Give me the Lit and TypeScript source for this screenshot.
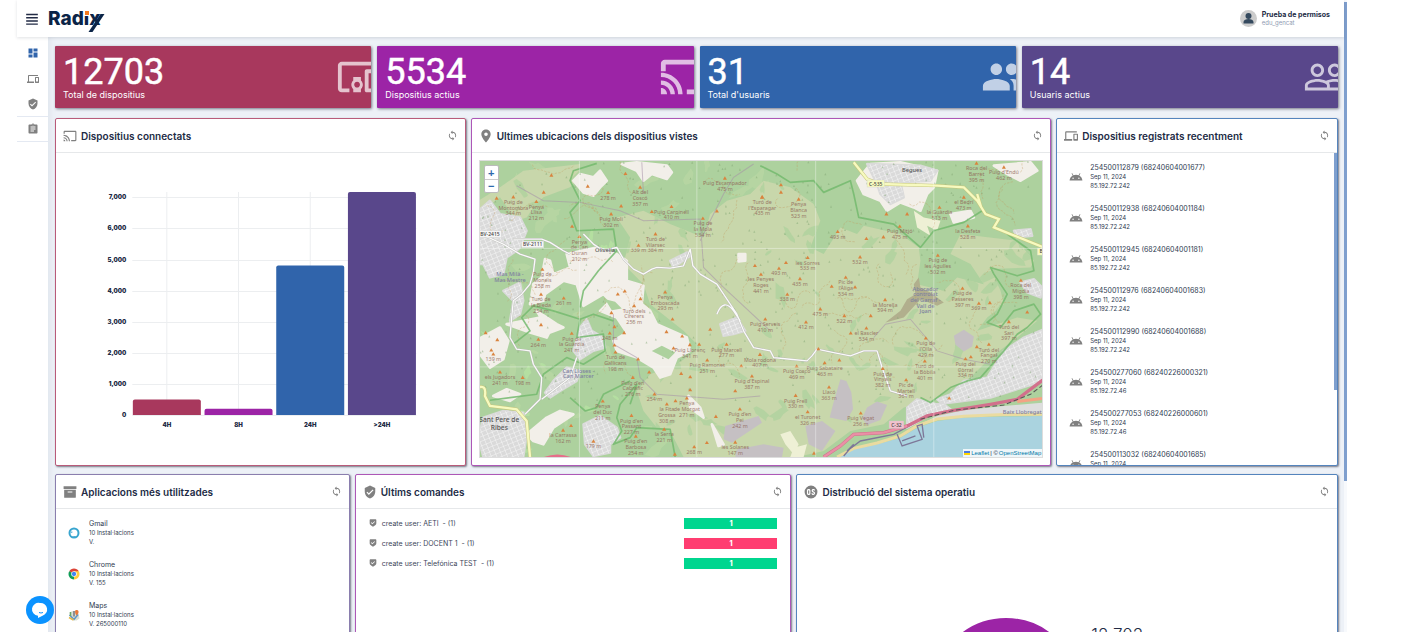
import { LitElement, html, svg, css } from "lit";
import { customElement, property } from "lit/decorators.js";

const ICONS: Record<string, string> = {
  menu: "M2 3h20v2.500H2zM2 8.500h20V11H2zM2 14h20v2.500H2zM2 19.500h20V22H2z",
  dashboard: "M3 13h8V3H3v10zm0 8h8v-6H3v6zm10 0h8V11h-8v10zm0-18v6h8V3h-8z",
  devices:
    "M4 6h18V4H4c-1.1 0-2 .9-2 2v11H0v3h14v-3H4V6zm19 2h-6c-.55 0-1 .45-1 1v10c0 .55.45 1 1 1h6c.55 0 1-.45 1-1V9c0-.55-.45-1-1-1zm-1 9h-4v-7h4v7z",
  shield:
    "M12 1L3 5v6c0 5.55 3.84 10.74 9 12 5.16-1.26 9-6.45 9-12V5l-9-4zm-2 16l-4-4 1.41-1.41L10 14.17l6.59-6.59L18 9l-8 8z",
  command:
    "M4 1h16c1 0 2 1 2 2v10c0 4-3 6-10 10C5 19 2 17 2 13V3c0-1 1-2 2-2zm6 15l8-8-1.5-1.5L10 13l-3-3-1.5 1.5z",
  clipboard:
    "M19 3h-4.18C14.4 1.84 13.3 1 12 1c-1.3 0-2.4.84-2.82 2H5c-1.1 0-2 .9-2 2v14c0 1.1.9 2 2 2h14c1.1 0 2-.9 2-2V5c0-1.1-.9-2-2-2zm-7 0c.55 0 1 .45 1 1s-.45 1-1 1-1-.45-1-1 .45-1 1-1zm2 14H7v-2h7v2zm3-4H7v-2h10v2zm0-4H7V7h10v2z",
  cast:
    "M21 3H3c-1.1 0-2 .9-2 2v3h2V5h18v14h-7v2h7c1.1 0 2-.9 2-2V5c0-1.1-.9-2-2-2zM1 18v3h3c0-1.66-1.34-3-3-3zm0-4v2c2.76 0 5 2.24 5 5h2c0-3.87-3.13-7-7-7zm0-4v2c4.97 0 9 4.03 9 9h2c0-6.08-4.93-11-11-11z",
  castLarge:
    "M23 3H3c-1.100 0-2 .9-2 2v4h2.500V5.500H24V3zM1 17.800V21h3.200c0-1.800-1.400-3.200-3.200-3.200zm0-4v2.200c2.700 0 5 2.300 5 5h2.300c0-4-3.300-7.200-7.300-7.200zm0-4V12c5 0 9 4 9 9h2.300C12.300 14.800 7.200 9.800 1 9.800zM14.500 18.500V21H24v-2.500z",
  place:
    "M12 1C7.600 1 4 4.600 4 9c0 6 8 14 8 14s8-8 8-14c0-4.400-3.600-8-8-8zm0 11c-1.700 0-3-1.300-3-3s1.300-3 3-3 3 1.300 3 3-1.300 3-3 3z",
  sync:
    "M12 4V1L8 5l4 4V6c3.310 0 6 2.690 6 6 0 1.010-.25 1.970-.7 2.800l1.460 1.460C19.540 15.030 20 13.570 20 12c0-4.420-3.580-8-8-8zm0 14c-3.310 0-6-2.690-6-6 0-1.010.25-1.970.7-2.800L5.240 7.740C4.460 8.970 4 10.430 4 12c0 4.420 3.580 8 8 8v3l4-4-4-4v3z",
  people:
    "M16 11c1.660 0 2.990-1.340 2.990-3S17.660 5 16 5c-1.660 0-3 1.340-3 3s1.340 3 3 3zm-8 0c1.660 0 2.990-1.340 2.990-3S9.660 5 8 5C6.340 5 5 6.340 5 8s1.340 3 3 3zm0 2c-2.330 0-7 1.170-7 3.500V19h14v-2.500c0-2.330-4.670-3.500-7-3.500zm8 0c-.29 0-.62.02-.97.05 1.160.84 1.970 1.970 1.970 3.450V19h6v-2.500c0-2.330-4.670-3.500-7-3.500z",
  peopleOutline:
    "M16.500 13c-1.200 0-3.070.34-4.500 1-1.430-.67-3.300-1-4.500-1C5.330 13 1 14.080 1 16.250V19h22v-2.750c0-2.170-4.330-3.250-6.500-3.250zm-4 4.500h-10v-1.250c0-.54 2.560-1.750 5-1.750s5 1.210 5 1.750v1.250zm9 0H14v-1.250c0-.46-.2-.86-.52-1.220.88-.3 1.960-.53 3.020-.53 2.440 0 5 1.210 5 1.750v1.250zM7.500 12c1.930 0 3.500-1.570 3.500-3.500S9.430 5 7.500 5 4 6.570 4 8.500 5.570 12 7.500 12zm0-5.500c1.100 0 2 .9 2 2s-.9 2-2 2-2-.9-2-2 .9-2 2-2zm9 5.500c1.930 0 3.500-1.570 3.500-3.500S18.430 5 16.500 5 13 6.570 13 8.500s1.570 3.500 3.500 3.500zm0-5.500c1.100 0 2 .9 2 2s-.9 2-2 2-2-.9-2-2 .9-2 2-2z",
  devicesOther:
    "M3 6h18V4H3c-1.100 0-2 .9-2 2v12c0 1.100.9 2 2 2h4v-2H3V6zm10 6H9v1.780c-.61.55-1 1.330-1 2.220s.39 1.670 1 2.220V20h4v-1.780c.61-.55 1-1.340 1-2.220s-.39-1.670-1-2.220V12zm-2 5.500c-.83 0-1.500-.67-1.500-1.500s.67-1.500 1.500-1.500 1.500.67 1.500 1.500-.67 1.500-1.500 1.500zM22 8h-6c-.5 0-1 .5-1 1v10c0 .5.5 1 1 1h6c.5 0 1-.5 1-1V9c0-.5-.5-1-1-1zm-1 10h-4v-8h4v8z",
  android:
    "M17.600 9.480l1.840-3.180c.16-.31.04-.69-.26-.85-.29-.15-.65-.06-.83.22l-1.880 3.240c-2.860-1.210-6.080-1.210-8.940 0L5.650 5.670c-.19-.29-.58-.38-.87-.2-.28.18-.37.54-.22.83L6.400 9.480C3.300 11.250 1.280 14.440 1 18h22c-.28-3.560-2.300-6.750-5.400-8.520zM7 15.250c-.69 0-1.250-.56-1.250-1.250S6.310 12.750 7 12.750s1.250.56 1.250 1.250-.56 1.250-1.250 1.250zm10 0c-.69 0-1.250-.56-1.250-1.250s.56-1.250 1.250-1.250 1.250.56 1.250 1.250-.56 1.250-1.250 1.250z",
  archive: "M1 2h22v5H1zM2 8h20v13c0 1-1 1-1 1H3c-1 0-1 0-1-1zm6 3v2h8v-2z",
  os:
    "M12 1a11 11 0 1 0 0 22 11 11 0 0 0 0-22zM8 7c2 0 3 1 3 3v4c0 2-1 3-3 3s-3-1-3-3v-4c0-2 1-3 3-3zm0 2c-.7 0-1 .4-1 1v4c0 .6.3 1 1 1s1-.4 1-1v-4c0-.6-.3-1-1-1zm8-2c2 0 3 1 3 2.500h-2c0-.5-.5-.7-1-.7-1 0-1.200 1.200-.3 1.700l1.800 1c2.500 1.500 1.500 5.500-1.500 5.500-2 0-3.200-1-3.200-3h2c0 .8.4 1.200 1.200 1.200 1.200 0 1.300-1.200.4-1.800l-1.700-1C12 10.900 13 7 16 7z",
};

const icon = (name: string, cls = "") =>
  html`<svg class="icon ${cls}" viewBox="0 0 24 24" aria-hidden="true"><path fill-rule="evenodd" d=${ICONS[name]}></path></svg>`;

const STATS = [
  { value: "12703", label: "Total de dispositius", icon: "devicesOther", tone: "red" },
  { value: "5534", label: "Dispositius actius", icon: "castLarge", tone: "magenta" },
  { value: "31", label: "Total d'usuaris", icon: "people", tone: "blue" },
  { value: "14", label: "Usuaris actius", icon: "peopleOutline", tone: "violet" },
];

const DEVICES = [
  ["254500112879 (68240604001677)", "85.192.72.242"],
  ["254500112938 (68240604001184)", "85.192.72.242"],
  ["254500112945 (68240604001181)", "85.192.72.242"],
  ["254500112976 (68240604001683)", "85.192.72.242"],
  ["254500112990 (68240604001688)", "85.192.72.242"],
  ["254500277060 (68240226000321)", "85.192.72.46"],
  ["254500277053 (68240226000601)", "85.192.72.46"],
  ["254500113032 (68240604001685)", "85.192.72.242"],
];

const COMMANDS = [
  { text: "create user: AETI  - (1)", ok: true },
  { text: "create user: DOCENT 1  - (1)", ok: false },
  { text: "create user: Telefónica TEST  - (1)", ok: true },
];

const BARS = [
  { label: "4H", value: 500, color: "#a8385d" },
  { label: "8H", value: 200, color: "#9c24a6" },
  { label: "24H", value: 4810, color: "#3064ab" },
  { label: ">24H", value: 7170, color: "#59478b" },
];

/* Peaks: x, y of the marker, then the label lines under it. */
const PEAKS: [number, number, ...string[]][] = [
  [130, 139, "Puig de", "Montombra", "344 m"], [199, 153, "Penya", "Llisa", "212 m"],
  [414, 126, "278 m"], [423, 190, "Puig Moli", "302 m"], [510, 110, "Alt del", "Coscó", "357 m"],
  [604, 168, "Puig Carpinell", "410 m"], [698, 203, "Puig de", "la Mola", "534 m"],
  [764, 83, "Puig Escampador", "475 m"], [876, 139, "Turó de", "l'Esparagar", "435 m"],
  [328, 258, "Penya", "de Can", "Duran", "212 m"], [505, 284, "339 m"], [556, 250, "Turó de", "Vilarsec", "384 m"],
  [217, 356, "Puig de", "Moneis", "258 m"], [213, 431, "Turó de", "la Bleda", "254 m"], [281, 442, "261 m"],
  [492, 465, "Turó dels", "Cirerers", "255 m"], [585, 424, "Penya", "Emboscada", "293 m"],
  [872, 371, "les Penyes", "Roges", "441 m"], [885, 505, "Puig Serveis", "410 m"],
  [205, 566, "264 m"], [305, 548, "Puig de", "la Guàrdia", "241 m"], [419, 547, "248 m"],
  [436, 604, "Turó de", "Gallicans", "198 m"], [659, 582, "Puig Llorenç", "341 m"], [769, 581, "Puig Marcell", "277 m"],
  [711, 628, "Puig Ramonet", "251 m"], [869, 611, "Mola rodona", "407 m"], [90, 664, "els Jugadors", "241 m"],
  [158, 680, "198 m"], [488, 680, "Puig d'en", "Cabrafic", "276 m"], [553, 730, "254 m"],
  [590, 760, "la Fita", "Grossa", "308 m"], [650, 742, "Penya", "de Morgat", "271 m"], [845, 676, "Puig d'Espinal", "387 m"],
  [398, 751, "Penya", "del Duc", "211 m"], [484, 794, "Puig d'en", "Passant", "227 m"], [809, 775, "Puig d'en", "Pei", "242 m"],
  [279, 838, "la Carrassa", "162 m"], [582, 835, "la Serra", "221 m"], [497, 856, "Puig d'en", "Barbosa", "254 m"],
  [795, 874, "les Solanes", "147 m"], [672, 888, "268 m"], [370, 871, "179 m"], [70, 610, "139 m"],
  [985, 146, "Penya", "Blanca", "523 m"], [1102, 243, "493 m"], [1012, 321, "les Sorres", "533 m"],
  [1169, 319, "532 m"], [926, 353, "493 m"], [989, 384, "435 m"], [951, 431, "338 m"],
  [1126, 380, "Pic de", "l'Àliga", "534 m"], [1244, 447, "la Morella", "594 m"], [1122, 495, "522 m"],
  [1050, 475, "475 m"], [1007, 514, "412 m"], [1188, 532, "el Rascler", "534 m"], [1402, 314, "Puig de", "les Agulles", "502 m"],
  [1288, 227, "Puig Mitjó", "475 m"], [1407, 170, "la Guàrdia", "513 m"], [1480, 140, "el Bedrí", "473 m"],
  [1492, 226, "la Desfeta", "528 m"], [1600, 50, "Puig d'Endú", "462 m"], [1518, 38, "Roca del", "Barret", "395 m"],
  [1476, 413, "Puig de", "Passeres", "397 m"], [1525, 458, "369 m"], [1651, 389, "Roca del", "Migdia", "398 m"],
  [1366, 562, "Puig de", "l'Olla", "429 m"], [1363, 631, "Turó de", "la Bòbila", "401 m"], [1615, 513, "Turó del", "Sari", "397 m"],
  [1555, 581, "Turó del", "Fangal", "270 m"], [1485, 624, "Puig del", "Còrral", "334 m"], [979, 646, "Puig Coscó", "469 m"],
  [1063, 636, "Puig Sabataire", "463 m"], [1237, 653, "Puig de", "Vinyals", "382 m"], [1307, 687, "Pic de", "Martell", "361 m"],
  [1076, 709, "Llacó", "363 m"], [976, 734, "Puig Frell", "330 m"], [1012, 783, "el Turonet", "326 m"], [1171, 787, "Puig Vegat", "256 m"],
];

const DOTS = [
  [244, 74], [221, 125], [353, 107], [466, 69], [453, 166], [545, 183], [740, 181], [80, 143], [306, 227],
  [443, 430], [464, 421], [511, 444], [424, 486], [433, 528], [462, 546], [213, 522], [47, 546], [64, 598], [82, 567],
  [607, 505], [589, 543], [636, 556], [687, 581], [720, 536], [610, 592], [504, 625], [537, 664], [633, 668], [660, 678],
  [433, 583], [303, 824], [616, 750], [660, 717], [737, 797], [710, 875], [614, 910], [795, 720], [813, 645], [854, 345],
  [932, 103], [932, 125], [875, 140], [1188, 264], [1239, 259], [1248, 190], [1310, 190], [947, 336], [1084, 407], [1154, 409],
  [1141, 547], [1201, 495], [1044, 594], [1107, 628], [1558, 456], [1670, 484], [1519, 588], [1501, 618], [1436, 742], [1031, 907],
];

/* Small deterministic generator, so the woodland texture is stable. */
const rng = (seed: number) => () => {
  seed = (seed * 1664525 + 1013904223) % 4294967296;
  return seed / 4294967296;
};

const patches = (seed: number, count: number, size: number, x0: number, y0: number, w: number, h: number) => {
  const r = rng(seed);
  let d = "";
  for (let i = 0; i < count; i++) {
    const cx = x0 + r() * w;
    const cy = y0 + r() * h;
    const a = r() * Math.PI;
    const len = size * (0.4 + r());
    for (let k = 0; k < 9; k++) {
      const t = (k / 9) * Math.PI * 2;
      const m = 0.5 + r() * 0.8;
      const px = Math.cos(t) * len * m;
      const py = Math.sin(t) * len * m * 0.4;
      const x = cx + px * Math.cos(a) - py * Math.sin(a);
      const y = cy + px * Math.sin(a) + py * Math.cos(a);
      d += `${k ? "L" : "M"}${x.toFixed(0)} ${y.toFixed(0)}`;
    }
    d += "z";
  }
  return d;
};

const trails = (seed: number, count: number) => {
  const r = rng(seed);
  let d = "";
  for (let i = 0; i < count; i++) {
    let x = 30 + r() * 1650;
    let y = 40 + r() * 640;
    let a = r() * Math.PI * 2;
    d += `M${x.toFixed(0)} ${y.toFixed(0)}`;
    for (let k = 0; k < 12; k++) {
      a += (r() - 0.5) * 1.8;
      x += Math.cos(a) * 12;
      y += Math.sin(a) * 12;
      d += `L${x.toFixed(0)} ${y.toFixed(0)}`;
    }
  }
  return d;
};

const specks = (seed: number, count: number) => {
  const r = rng(seed);
  let d = "";
  for (let i = 0; i < count; i++) d += `M${(r() * 1700).toFixed(0)} ${(35 + r() * 720).toFixed(0)}l3 -7l3 7z`;
  return d;
};

const SCRUB =
  "M25 150L90 110 160 60 330 40 320 90 300 110 220 140 190 170 170 200 140 210 90 140 25 190zM440 200L520 180 600 220 700 260 720 190 770 150 840 130 880 90 960 110 1030 160 1050 210 1020 290 1060 310 1110 230 1160 250 1180 225 1290 250 1345 290 1350 330 1340 400 1420 420 1460 380 1540 400 1500 340 1440 310 1470 250 1640 270 1690 330 1680 350 1560 355 1590 420 1600 460 1550 500 1520 540 1640 500 1700 510 1640 560 1560 620 1500 680 1430 720 1380 750 1300 770 1240 820 1140 840 1060 900 980 918 640 918 600 840 560 830 520 780 500 720 540 670 620 640 690 590 640 540 540 460 520 400 460 340 480 260z";
const BARE =
  "M310 90L330 70 370 80 390 60 410 90 390 110 370 135 340 125zM455 40L500 35 590 45 605 65 590 85 545 70 520 90 500 60zM225 325L240 330 250 370 300 350 290 310 380 290 440 310 470 330 470 390 520 405 515 460 540 480 560 520 650 560 660 600 620 620 600 670 570 680 550 650 500 620 440 600 430 570 470 545 440 500 390 480 420 450 400 430 340 465 320 400 280 390 225 430 220 450 180 460 190 400 215 380zM110 520L210 500 250 520 230 560 180 545zM200 480L260 520 280 530 240 545zM25 565L90 530 115 570 100 625 60 650 30 610zM70 735L110 715 150 730 120 750zM170 850L230 800 270 780 310 790 250 830 220 880 190 870zM805 310L825 310 825 330 805 332zM1290 35L1400 60 1390 110 1370 130 1350 180 1330 170 1290 155 1250 180 1230 150 1180 130 1160 90 1200 40zM1570 45L1680 35 1700 60 1650 90 1610 70zM1440 190L1500 180 1510 200 1450 215zM655 735L690 770 700 800 660 770zM725 820L760 880 745 885z";
const MEADOW = "M1330 180L1360 200 1410 210 1400 240 1370 225 1380 255 1340 230zM930 850L960 840 985 880 970 910 945 880zM970 890L1010 880 1000 918 960 918z";
const TOWNS =
  "M25 180L60 150 90 190 150 200 170 240 150 290 140 300 110 320 100 370 60 380 40 340 25 340zM100 420L150 395 160 450 150 490 120 510 130 450zM330 530L350 505 365 540 400 560 405 590 370 600 330 625 310 600zM250 690L290 650 330 660 320 690 270 720 240 740 225 725zM40 800L100 780 160 785 170 850 160 918 40 918 25 860zM340 820L390 795 440 830 450 860 420 880 420 905 370 915 345 880zM750 520L800 500 825 540 790 550 760 555zM600 330L650 305 660 315 610 350zM1190 40L1350 45 1400 60 1380 90 1290 95 1300 140 1260 160 1230 130 1220 100zM1650 395L1690 385 1715 410 1710 440 1670 425zM1720 535L1660 560 1600 600 1550 680 1480 690 1440 730 1400 745 1440 775 1380 790 1310 830 1310 770 1340 745 1400 760 1560 740 1720 690zM1630 240L1680 235 1685 255 1640 260z";
const PARK =
  "M380 38L310 60 300 90 330 150 300 185 320 240 430 235 440 300 385 360 340 420 330 470M130 580L180 540 155 500 190 465 250 480 330 505 370 490 430 510M330 505L320 560 400 550 405 600 340 640 290 620 220 670 200 730 60 748M300 740L345 780 380 770 400 730 480 690M450 760L440 800 455 840 430 880 480 860 500 830 600 835 615 918M450 760L500 700 480 760M870 45L920 70 960 95 1030 90 1060 125 1140 90 1150 130 1165 200 1270 220 1350 290 1390 240 1480 215 1535 180M1610 250L1680 300 1690 360 1640 375 1560 350 1570 370 1610 430 1580 490 1550 515 1590 530 1630 480 1690 460 1710 490 1670 530 1640 550 1600 600 1530 680 1490 690 1440 710 1380 755 1350 740";
const ROADS =
  "M25 250L60 262 100 280 150 310 195 325 190 365 180 400 155 430 130 450 125 500 120 560 140 595 180 600 190 640 215 680 210 745 165 790M130 265L215 265 240 275 280 300 300 310M340 250L370 280 400 300 440 290 460 325 490 355 520 370 545 355 560 350 600 352 640 345 660 295 668 345 690 370 740 400 760 430 780 460 800 490 820 540 850 590 900 600 910 620 960 625 1010 630 1025 615 1040 595 1090 605 1140 615 1180 600 1220 600 1235 650M215 745L300 680 320 620M1235 650L1260 720 1310 735M740 490Q760 440 790 480L810 510";

const mapArt = () => svg`
  <defs><clipPath id="urban"><path d=${TOWNS}></path></clipPath>
    <pattern id="streets" width="15" height="13" patternUnits="userSpaceOnUse" patternTransform="rotate(-22)"><path d="M0 0H15M0 0V13" stroke="#fff" stroke-width="3" fill="none"></path></pattern>
    <clipPath id="scrub"><path d=${SCRUB}></path></clipPath></defs>
  <rect x="0" y="0" width="1760" height="950" fill="#add19e"></rect>
  <path d=${patches(5, 50, 34, 20, 40, 900, 860)} fill="#b9d8a4" opacity=".7"></path>
  <path d=${patches(41, 18, 26, 20, 40, 600, 860)} fill="#b9e8a3" opacity=".6"></path>
  <path d=${SCRUB} fill="#c8d7ab"></path>
  <g clip-path="url(#scrub)"><path d=${patches(77, 150, 26, 20, 60, 1700, 850)} fill="#add19e" opacity=".75"></path></g>
  <path d=${BARE} fill="#f2efe9" stroke="#f2efe9" stroke-width="8" stroke-linejoin="round"></path>
  <path d=${MEADOW} fill="#eef0d5"></path>
  <path d="M250 425l25 -20 40 20 -15 40 -50 -10zM545 600l30 -15 40 20 -20 20zM405 445l30 8 20 20 -30 5z" fill="#add19e"></path>
  <path d=${TOWNS} fill="#dadada" stroke="#dadada" stroke-width="7" stroke-linejoin="round"></path>
  <g clip-path="url(#urban)"><rect x="0" y="0" width="1760" height="950" fill="url(#streets)" opacity=".8"></rect></g>
  <path d="M1110 685l18 5 15 35 5 50 -20 35 -50 -10 10 -40zM1190 770l30 -18 30 10 -20 45 -40 15 -15 -20zM1005 825l50 -15 40 30 -40 60 -40 -20zM1450 555l30 -18 30 20 -5 30 -25 15 -25 -20zM765 825l100 -30 10 20 -90 60 -25 -10zM800 895l80 -15 60 10 -5 30h-140z" fill="#c5c0c3"></path>
  <path d="M1245 515L1290 480 1310 445 1335 430 1330 400 1345 380 1350 410 1380 425 1420 455 1400 465 1350 445 1300 500z" fill="#b1af8d"></path>
  <path d=${specks(9, 430)} fill="#83a876" opacity=".5"></path>
  <path d=${trails(13, 50)} fill="none" stroke="#c19a62" stroke-width="2" stroke-dasharray="7 4" opacity=".55"></path>
  <path d="M140 105L220 150 330 155 450 180 520 210 690 205 700 350 760 410 900 540M515 35L520 130M690 270L760 130 790 80 850 40M1210 560L1245 520 1320 505 1400 600 1480 625 1560 640M430 490L430 580 500 620 510 680 560 730 760 745 870 735" fill="none" stroke="#a58fa8" stroke-width="3" opacity=".55"></path>
  <path d=${PARK} fill="none" stroke="#74ba6e" stroke-width="5" opacity=".85" stroke-linejoin="round"></path>
  <path d=${ROADS} fill="none" stroke="#b5b5b0" stroke-width="6" stroke-linejoin="round"></path>
  <path d=${ROADS} fill="none" stroke="#fafafa" stroke-width="4" stroke-linejoin="round"></path>
  <path d="M1150 35L1190 85 1230 100 1400 105 1480 110 1520 150 1545 190 1585 205 1570 230 1620 250 1720 290M1520 130l12 40" fill="none" stroke="#c7c77e" stroke-width="10"></path>
  <path d="M1150 35L1190 85 1230 100 1400 105 1480 110 1520 150 1545 190 1585 205 1570 230 1620 250 1720 290M1520 130l12 40" fill="none" stroke="#f7fabf" stroke-width="7"></path>
  <path d="M25 710Q50 700 45 735L60 765 140 775 170 810 180 918" fill="none" stroke="#c7c77e" stroke-width="10"></path>
  <path d="M25 710Q50 700 45 735L60 765 140 775 170 810 180 918" fill="none" stroke="#f7fabf" stroke-width="7"></path>
  <path d="M1100 918L1150 895 1220 880 1290 860 1340 830 1400 810 1480 800 1600 797 1720 795V950H1100z" fill="#aad3df"></path>
  <path d="M1340 824L1400 795 1480 778 1600 765 1720 755V790H1600L1480 796 1400 804z" fill="#dedede"></path>
  <path d="M1100 918L1150 892 1220 876 1290 855 1340 824 1400 804 1480 796 1600 791 1720 790" fill="none" stroke="#eadba0" stroke-width="9"></path>
  <path d="M1120 915L1150 880 1130 900 1170 870 1270 850 1380 790 1450 780M1280 850l15 35 60 -20 -15 -40 15 -5 5 40M1295 870l40 -15" fill="none" stroke="#7d7798" stroke-width="4"></path>
  <path d="M1060 918L1110 885 1150 850 1240 845 1310 825 1370 795 1440 780 1560 760 1640 745 1720 685" fill="none" stroke="#d2708c" stroke-width="10"></path>
  <path d="M1060 918L1110 885 1150 850 1240 845 1310 825" fill="none" stroke="#ea8fa6" stroke-width="7"></path>
  <path d="M1640 752L1720 742" stroke="#f3a384" stroke-width="9"></path>
  <path d="M1350 805L1450 778 1600 762 1680 730 1720 700" fill="none" stroke="#555" stroke-width="3" stroke-dasharray="14 8"></path>
  <path d="M222 918q40 -15 80 0z" fill="#e66e89"></path>
  <g fill="#d9843f">${[...PEAKS, ...DOTS].map((p) => svg`<path d="M${p[0] as number} ${(p[1] as number) - 6}l6 10h-12z"></path>`)}</g>
  <g class="peak">${PEAKS.map(([x, y, ...lines]) => lines.map((t, i) => svg`<text x=${x} y=${y + 21 + i * 17}>${t}</text>`))}</g>
  <g class="town">
    <text x="405" y="305">Olivella</text><text x="1325" y="63">Begues</text>
    <text class="faint" x="120" y="375">Mas Milà -</text><text class="faint" x="120" y="393">Mas Mestre</text>
    <text class="faint" x="325" y="665">Can Lloses -</text><text class="faint" x="325" y="681">Can Marcer</text>
    <text class="faint" x="1365" y="420">Abocador</text><text class="faint" x="1365" y="437">controlat</text><text class="faint" x="1365" y="454">del Garraf -</text><text class="faint" x="1365" y="471">Vall de</text><text class="faint" x="1365" y="488">Joan</text>
    <text class="faint" x="1655" y="790">Baix Llobregat</text>
    <text class="big" x="88" y="814">Sant Pere de</text><text class="big" x="88" y="838">Ribes</text>
  </g>
  <g class="road">
    <rect x="26" y="240" width="68" height="20"></rect><text x="60" y="256">BV-2415</text>
    <rect x="155" y="271" width="66" height="20"></rect><text x="188" y="287">BV-2111</text>
    <rect class="yellow" x="1190" y="88" width="52" height="21"></rect><text x="1216" y="105">C-535</text>
    <rect class="yellow" x="1700" y="292" width="40" height="21"></rect><text x="1712" y="308">B</text>
    <rect class="pink" x="1256" y="810" width="44" height="22"></rect><text x="1278" y="827">C-32</text>
  </g>
  <path d="M328 31V918M680 31V918M1036 31V918M1390 31V918M25 293H1721M25 648H1721" stroke="#fff" stroke-width="2" opacity=".55"></path>`;

@customElement("radix-panel")
export class RadixPanel extends LitElement {
  @property() heading = "";
  @property() glyph = "";

  static styles = css`
    :host { display: flex; flex-direction: column; box-sizing: border-box; min-width: 0; background: #fff;
      border: 1px solid var(--tone); border-radius: 2px; box-shadow: 1px 1px 2px rgba(40, 40, 60, 0.6); overflow: hidden; }
    .head { display: flex; align-items: center; gap: 4px; height: 34px; box-sizing: border-box; padding: 0 7px; border-bottom: 1px solid #e6e8ea; }
    h2 { flex: 1; margin: 0; font: 600 10px/14px Inter, "Open Sans", sans-serif; color: #222b45; white-space: nowrap; }
    .icon { width: 14px; height: 14px; fill: #808080; flex: none; }
    button { display: flex; padding: 0; border: 0; background: none; cursor: pointer; }
    .sync { width: 11px; height: 11px; }
    .body { height: 312px; min-height: 0; }
  `;

  render() {
    return html`<header class="head">
        ${icon(this.glyph)}
        <h2>${this.heading}</h2>
        <button type="button" aria-label="Actualitza ${this.heading}">${icon("sync", "sync")}</button>
      </header>
      <div class="body"><slot></slot></div>`;
  }
}

@customElement("app-root")
export class AppRoot extends LitElement {
  static styles = css`
    :host { display: block; height: 100vh; box-sizing: border-box; padding: 0 54px 2px 17px; background: #fff; overflow: hidden;
      font-family: Inter, "Open Sans", sans-serif; color: #222b45; }
    * { box-sizing: border-box; }
    ul { list-style: none; margin: 0; padding: 0; }
    .icon { width: 12px; height: 12px; fill: #808080; flex: none; display: block; }
    .shell { display: flex; height: 100%; position: relative; }
    .page { flex: 1; min-width: 0; display: flex; flex-direction: column; }
    .rail { width: 3px; background: #f7f9fc; padding-top: 2px; }
    .thumb { display: block; width: 3px; height: 76%; background: #7f9fce; }

    .top { display: flex; align-items: center; height: 37px; padding: 0 14px 0 8px; flex: none; box-shadow: 0 1px 3px rgba(44, 51, 73, 0.15); z-index: 1; background: #fff; }
    .menu { display: flex; padding: 0; border: 0; background: none; }
    .menu .icon { width: 14px; height: 14px; fill: #222b45; }
    .logo { position: relative; margin-left: 9px; font: 800 19px/24px Inter, sans-serif; color: #0b2447; text-decoration: none; }
    .mark { position: absolute; left: 36px; top: 0; width: 24px; height: 28px; overflow: visible; }
    .user { margin-left: auto; display: flex; align-items: center; gap: 5px; }
    .avatar { width: 17px; height: 17px; display: block; }
    .who { display: flex; flex-direction: column; }
    .name { font: 700 7px/9px Inter, sans-serif; }
    .login { font: 400 6px/8px Inter, sans-serif; color: #8f9bb3; }

    .main { flex: 1; min-height: 0; display: flex; }
    .side { width: 31px; padding-top: 3px; background: #fff; }
    .side a { display: flex; align-items: center; justify-content: center; height: 26px; }
    .side .line { border-bottom: 1px solid #e4e9f2; height: 25px; }
    .side .on { fill: #3064ab; }

    .content { flex: 1; min-width: 0; padding: 9px 6px 0 7px; background: #edf1f7; box-shadow: inset 6px 0 6px -4px #dfe4ec; overflow: hidden; }
    .stats { display: grid; grid-template-columns: repeat(4, 1fr); gap: 6px; margin-bottom: 10px; }
    .stat { display: flex; align-items: center; height: 62px; padding-left: 8px; border-radius: 1px; color: #fff; overflow: hidden; box-shadow: 1px 1px 3px rgba(40, 40, 60, 0.6); }
    .figures { flex: 1; min-width: 0; }
    .value { display: block; font: 400 36px/36px Roboto, sans-serif; -webkit-text-stroke: 0.5px #fff; }
    .label { display: block; font: 400 9px/10px Inter, sans-serif; }
    .stat .icon { width: 46px; height: 46px; margin-right: -11px; fill: #fff; opacity: 0.7; }
    .red { background: #a8385d; --tone: #b95b7a; }
    .magenta { background: #9c24a6; --tone: #ad57b7; }
    .blue { background: #3064ab; --tone: #5484bd; }
    .violet { background: #59478b; --tone: #8a7eae; }
    .row { display: grid; gap: 5px; margin-bottom: 8px; }
    .upper { grid-template-columns: 411fr 581fr 282fr; }
    .lower { grid-template-columns: 295fr 437fr 542fr; }
    .row radix-panel { background: #fff; }

    .chart { display: block; width: 100%; height: 100%; }
    .chart text { font: 900 6px Inter, sans-serif; fill: #222b45; }
    .grid { stroke: #eceef0; fill: none; }

    .map { position: relative; height: 100%; padding: 7px; }
    .map-art { display: block; width: 100%; height: 100%; background: #ddd; border: 1px solid #ddd; }
    .peak text { font: 400 16px "Noto Sans", sans-serif; fill: #8f6356; text-anchor: middle; opacity: 0.8; }
    .town text { font: 500 17px "Noto Sans", sans-serif; fill: #555; text-anchor: middle; }
    .town .faint { fill: #7d80a0; }
    .town .big { font-size: 20px; }
    .road rect { fill: #f5f5f5; stroke: #ccc; }
    .road .yellow { fill: #f7fabf; }
    .road .pink { fill: #f1c1cd; }
    .road text { font: 500 15px "Noto Sans", sans-serif; fill: #444; text-anchor: middle; }
    .zoom { position: absolute; left: 12px; top: 12px; display: grid; border: 1px solid #bbb; border-radius: 2px; background: #fff; }
    .zoom button { width: 13px; height: 13px; padding: 0; border: 0; background: none; font: 700 11px/12px "Liberation Sans", sans-serif; color: #2e69ad; }
    .zoom button + button { border-top: 1px solid #ccc; }
    .credit { position: absolute; right: 8px; bottom: 8px; display: flex; align-items: center; gap: 1px; padding: 0 1px; background: rgba(255, 255, 255, 0.8); font: 400 6px/8px "Liberation Sans", sans-serif; }
    .credit a { color: #0078a8; text-decoration: none; }
    .flag { width: 6px; height: 4px; }

    .scroller { display: flex; height: 100%; overflow: hidden; }
    .list { flex: 1; padding-top: 10px; }
    .item { display: flex; align-items: center; gap: 8px; height: 27px; margin-bottom: 14px; padding-left: 12px; font-size: 6px; line-height: 9px; }
    .item .strong { font-size: 7px; }
    .item div { color: #2e3a4f; white-space: nowrap; }
    .devices .item { gap: 7px; }
    .devices .icon { width: 14px; height: 14px; }
    .apps .item { gap: 9px; }
    .pic { width: 12px; height: 12px; }

    .commands { padding-top: 4px; }
    .command { display: flex; align-items: center; gap: 5px; height: 20px; padding: 0 13px; font-size: 7px; color: #3c4559; white-space: pre; }
    .command .icon { width: 8px; height: 8px; }
    .command span { flex: 1; }
    .badge { width: 93px; height: 11px; font: 800 7px/11px Inter, sans-serif; color: #fff; text-align: center; background: #00d68f; }
    .badge.bad { background: #ff3d71; }

    .os { display: flex; justify-content: center; gap: 12px; padding: 109px 58px 0 0; }
    .donut { width: 146px; height: 146px; flex: none; }
    .total { padding-top: 7px; font: 300 17px/20px Inter, sans-serif; color: #222b45; }
    .chat { position: absolute; left: 9px; bottom: 8px; width: 28px; height: 28px; padding: 0; border: 0; background: none; z-index: 2; }
    .chat svg { display: block; width: 28px; height: 28px; }
  `;

  private chart() {
    const y = (v: number) => 262 - v * 0.0311;
    return html`<svg class="chart" viewBox="0 0 408 312" role="img" aria-label="Dispositius connectats">
      ${[0, 1, 2, 3, 4, 5, 6, 7].map(
        (k) => svg`<path class="grid" d="M76 ${Math.round(y(k * 1000)) + 0.5}H360"></path>
          <text x="70" y=${y(k * 1000) + 2} text-anchor="end">${k ? `${k},000` : "0"}</text>`,
      )}
      ${BARS.map((b, i) => {
        const x = 76.5 + i * 71.7;
        return svg`<path class="grid" d="M${x + 34} 39V262"></path>
          <path fill=${b.color} d="M${x} 262V${y(b.value) + 2}q0 -2 2 -2h64q2 0 2 2V262z"></path>
          <text x=${x + 34} y="274" text-anchor="middle">${b.label}</text>`;
      })}
    </svg>`;
  }

  private app(name: string, version: string, art: unknown) {
    return html`<li class="item">
      <svg class="pic" viewBox="0 0 24 24" aria-hidden="true">${art}</svg>
      <div><div class="strong">${name}</div><div>10 Instal·lacions</div><div>${version}</div></div>
    </li>`;
  }

  render() {
    const nav = [
      ["dashboard", "Tauler", "on", ""],
      ["devices", "Dispositius", "", ""],
      ["shield", "Seguretat", "", "line"],
      ["clipboard", "Informes", "", "line"],
    ];
    return html`<div class="shell">
      <div class="page">
        <header class="top">
          <button class="menu" type="button" aria-label="Menú">${icon("menu")}</button>
          <a class="logo" href="#">Radix<svg class="mark" viewBox="0 0 24 28" aria-hidden="true"><path fill="#fff" d="M0 3h6v6H0z"></path><path fill="#f47b20" d="M1 4h4v4H1z"></path><path d="M16.500 7h4L8.500 25H4.500z" fill="#0b2447"></path></svg></a>
          <div class="user">
            <svg class="avatar" viewBox="0 0 34 34" aria-hidden="true"><circle cx="17" cy="17" r="17" fill="#ccc"></circle><circle cx="17" cy="12" r="6" fill="#34495e"></circle><path d="M7 27v-3c0-8 20-8 20 0v3z" fill="#34495e"></path></svg>
            <div class="who"><span class="name">Prueba de permisos</span><span class="login">edu_gencat</span></div>
          </div>
        </header>
        <div class="main">
          <nav class="side">
            ${nav.map(([g, label, on, line]) => html`<a class=${line} href="#" aria-label=${label}>${icon(g, on)}</a>`)}
          </nav>
          <main class="content">
            <section class="stats">
              ${STATS.map(
                (s) => html`<article class="stat ${s.tone}">
                  <div class="figures"><span class="value">${s.value}</span><span class="label">${s.label}</span></div>
                  ${icon(s.icon)}
                </article>`,
              )}
            </section>
            <section class="row upper">
              <radix-panel class="red" heading="Dispositius connectats" glyph="cast">${this.chart()}</radix-panel>
              <radix-panel class="magenta" heading="Ultimes ubicacions dels dispositius vistes" glyph="place">
                <div class="map">
                  <svg class="map-art" viewBox="25 31 1696 887" preserveAspectRatio="xMidYMid slice" role="img" aria-label="Mapa">${mapArt()}</svg>
                  <div class="zoom"><button type="button">+</button><button type="button">−</button></div>
                  <div class="credit">
                    <svg class="flag" viewBox="0 0 6 4" aria-hidden="true"><path fill="#4c7be1" d="M0 0h6v2H0z"></path><path fill="#ffd500" d="M0 2h6v2H0z"></path></svg>
                    <a href="#">Leaflet</a><span>| ©</span><a href="#">OpenStreetMap</a>
                  </div>
                </div>
              </radix-panel>
              <radix-panel class="blue" heading="Dispositius registrats recentment" glyph="devices">
                <div class="scroller">
                  <ul class="list devices">
                    ${DEVICES.map(
                      ([id, ip]) => html`<li class="item">
                        ${icon("android")}
                        <div><div class="strong">${id}</div><div>Sep 11, 2024</div><div>${ip}</div></div>
                      </li>`,
                    )}
                  </ul>
                  <span class="thumb"></span>
                </div>
              </radix-panel>
            </section>
            <section class="row lower">
              <radix-panel class="violet" heading="Aplicacions més utilitzades" glyph="archive">
                <ul class="list apps">
                  ${this.app("Gmail", "V.", svg`<circle cx="12" cy="12" r="9" fill="#fff" stroke="#39a5cf" stroke-width="4"></circle><path d="M5 12l3-4 1 3zM8 19l8 1-3-2z" fill="#39a5cf"></path>`)}
                  ${this.app("Chrome", "V. 155", svg`<path d="M12 12L2.500 6.500A11 11 0 0 1 21.500 6.500z" fill="#db4437"></path><path d="M12 12L2.500 6.500A11 11 0 0 0 12 23z" fill="#0f9d58"></path><path d="M12 12V23A11 11 0 0 0 21.500 6.500H12z" fill="#ffcd40"></path><circle cx="12" cy="12" r="5.500" fill="#fff"></circle><circle cx="12" cy="12" r="4.300" fill="#4285f4"></circle>`)}
                  ${this.app("Maps", "V. 265000110", svg`<path d="M3 7l6-3 12 5 2 10-6 4-11-1z" fill="#d9dfd3"></path><path d="M3 12l9 9 8-10" fill="none" stroke="#5a93c7" stroke-width="3"></path><path d="M2 17l9 5" stroke="#e7b84a" stroke-width="3"></path><path d="M12 4v11" stroke="#8b8f96" stroke-width="4"></path><path d="M17 2c5 0 6 5 0 11-4-6-4-11 0-11z" fill="#e8793a"></path><path d="M5 6v8" stroke="#6aa56a" stroke-width="3"></path>`)}
                </ul>
              </radix-panel>
              <radix-panel class="magenta" heading="Últims comandes" glyph="shield">
                <ul class="commands">
                  ${COMMANDS.map((c) => html`<li class="command">${icon("command")}<span>${c.text}</span><b class="badge ${c.ok ? "" : "bad"}">1</b></li>`)}
                </ul>
              </radix-panel>
              <radix-panel class="blue" heading="Distribució del sistema operatiu" glyph="os">
                <div class="os">
                  <svg class="donut" viewBox="0 0 146 146" aria-hidden="true"><circle cx="73" cy="73" r="66" fill="none" stroke="#9c24a6" stroke-width="14"></circle></svg>
                  <div class="total">12,703</div>
                </div>
              </radix-panel>
            </section>
          </main>
        </div>
      </div>
      <div class="rail"><span class="thumb"></span></div>
      <button class="chat" type="button" aria-label="Xat">
        <svg viewBox="0 0 28 28" aria-hidden="true"><circle cx="14" cy="14" r="14" fill="#0b93ff"></circle><path d="M14 7a6.500 6.500 0 1 0-2 12.800V22l4.500-2.300A6.500 6.500 0 0 0 14 7z" fill="#fff"></path><path d="M13 16.500q2 1 4 0" stroke="#0b93ff" fill="none"></path></svg>
      </button>
    </div>`;
  }
}
